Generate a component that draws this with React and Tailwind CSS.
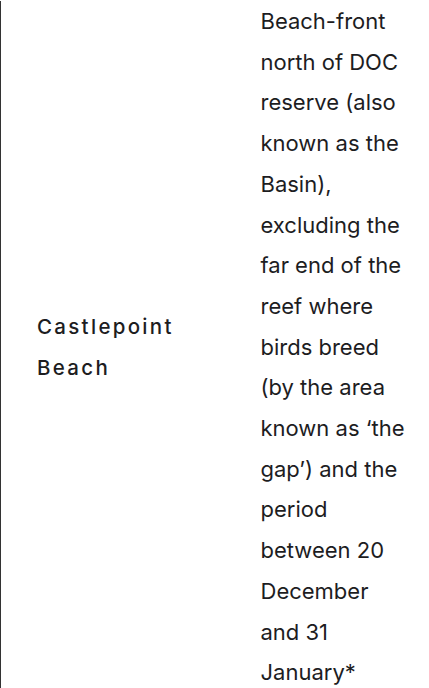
import React from 'react';

const lines = [
  'Beach-front',
  'north of DOC',
  'reserve (also',
  'known as the',
  'Basin),',
  'excluding the',
  'far end of the',
  'reef where',
  'birds breed',
  '(by the area',
  'known as \u2018the',
  'gap\u2019) and the',
  'period',
  'between 20',
  'December',
  'and 31',
  'January*',
];

export default function App() {
  return (
    <div className="bg-white min-h-screen overflow-hidden" style={{ fontFamily: 'Inter, "Liberation Sans", sans-serif' }}>
      <table className="border-collapse border-l border-[#333333] mt-[1px]">
        <tbody>
          <tr>
            <td className="w-[260px] pl-[36px] align-middle text-[20.5px] font-medium tracking-[2.3px] leading-[41px] text-[#1d1d1f]">
              Castlepoint
              <br />
              Beach
            </td>
            <td className="align-middle text-[22px] leading-[40.7px] text-[#1d1d1f]">
              {lines.map((l) => (
                <div key={l} className="whitespace-nowrap">{l}</div>
              ))}
            </td>
          </tr>
        </tbody>
      </table>
    </div>
  );
}
